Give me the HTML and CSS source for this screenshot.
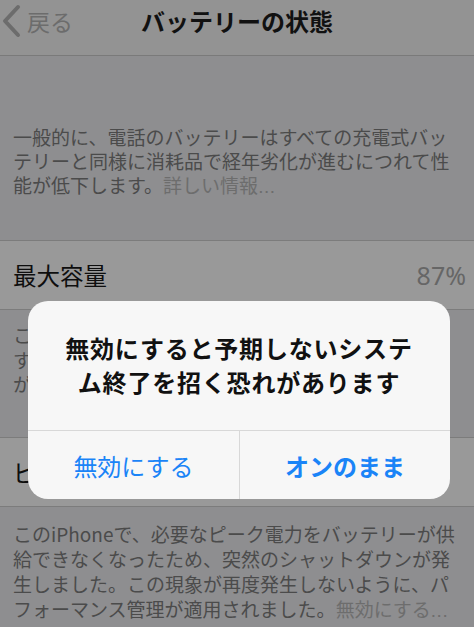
FILE: index.html
```html
<!DOCTYPE html>
<html lang="ja">
<head>
<meta charset="utf-8">
<title>バッテリーの状態</title>
<link rel="stylesheet" href="styles.css">
</head>
<body>
<div class="screen">
  <header class="nav">
    <div class="back">
      <svg class="chev" width="20" height="34" viewBox="0 0 20 34"><path d="M17 3 L4 17 L17 31" fill="none" stroke="#6c6c6c" stroke-width="4" stroke-linecap="round" stroke-linejoin="round"/></svg>
      <span class="back-label">戻る</span>
    </div>
    <h1 class="title">バッテリーの状態</h1>
    <div></div>
  </header>

  <p class="note note-top">一般的に、電話のバッテリーはすべての充電式バッテリーと同様に消耗品で経年劣化が進むにつれて性能が低下します。<span class="link">詳しい情報<span class="dots">...</span></span></p>

  <div class="row">
    <span class="row-label">最大容量</span>
    <span class="row-value">87%</span>
  </div>

  <p class="note note-mid">これは新品時と比較したバッテリー容量の尺度で<br>す。容量が低いと、充電から次の充電までの時間<br>が短くなる場合があります。</p>

  <div class="row">
    <span class="row-label">ピークパフォーマンス性能</span>
  </div>

  <p class="note note-bottom">このiPhoneで、必要なピーク電力をバッテリーが供給できなくなったため、突然のシャットダウンが発生しました。この現象が再度発生しないように、パフォーマンス管理が適用されました。<span class="link">無効にする<span class="dots">...</span></span></p>

  <div class="alert">
    <div class="alert-title">無効にすると予期しないシステム終了を招く恐れがあります</div>
    <div class="alert-actions">
      <button class="alert-btn">無効にする</button>
      <button class="alert-btn strong">オンのまま</button>
    </div>
  </div>
</div>
</body>
</html>
```

FILE: styles.css
```css
html, body {
  margin: 0;
  padding: 0;
}
body {
  font-family: "Noto Sans CJK JP", "Noto Sans", sans-serif;
  background: #8e8e90;
}
.screen {
  position: relative;
  width: 474px;
  height: 627px;
  overflow: hidden;
  background: #8e8e90;
}
.nav {
  height: 55px;
  background: #939393;
  border-bottom: 1px solid #7a7a7a;
  display: grid;
  grid-template-columns: 1fr auto 1fr;
  align-items: start;
}
.back {
  display: flex;
  align-items: center;
  gap: 6px;
  padding: 4px 0 0 1px;
  height: 34px;
}
.chev {
  display: block;
}
.back-label {
  font-size: 23px;
  color: #6c6c6c;
  line-height: 34px;
}
.title {
  margin: 0;
  padding-top: 4px;
  font-size: 24px;
  font-weight: 700;
  line-height: 34px;
  color: #111;
}
.note {
  margin: 0;
  padding: 0 13px;
  font-size: 19px;
  color: #4b4b4b;
}
.link {
  color: #6d6d6d;
}
.dots {
  font-family: "Liberation Sans", sans-serif;
  letter-spacing: 0.5px;
}
.note-top {
  padding-top: 69px;
  padding-bottom: 41px;
  line-height: 24px;
}
.note-mid {
  padding-top: 13px;
  padding-bottom: 40px;
  line-height: 24.5px;
}
.note-bottom {
  padding-top: 14px;
  line-height: 25px;
}
.row {
  height: 68px;
  background: #999999;
  border-top: 1px solid #7c7c7c;
  border-bottom: 1px solid #7c7c7c;
  display: flex;
  align-items: center;
  justify-content: space-between;
  padding: 0 8px 0 13px;
}
.row-label {
  font-size: 23.5px;
  color: #0e0e0e;
}
.row-value {
  font-family: "Noto Sans", sans-serif;
  font-size: 25px;
  color: #666;
}
.alert {
  position: absolute;
  left: 28px;
  top: 301px;
  width: 422px;
  height: 198px;
  background: #f7f7f7;
  border-radius: 20px;
  overflow: hidden;
  display: flex;
  flex-direction: column;
}
.alert-title {
  padding: 30px 28px 0;
  height: 130px;
  flex: none;
  box-sizing: border-box;
  font-size: 24px;
  font-weight: 700;
  line-height: 34px;
  letter-spacing: 0.8px;
  text-align: center;
  color: #111;
  border-bottom: 1px solid #d8d8d8;
}
.alert-actions {
  flex: 1;
  display: grid;
  grid-template-columns: 211px 1fr;
}
.alert-btn {
  border: none;
  background: transparent;
  font-family: "Noto Sans CJK JP", "Noto Sans", sans-serif;
  font-size: 24px;
  color: #1a84f7;
  padding: 0;
  margin: 0;
}
.alert-btn + .alert-btn {
  border-left: 1px solid #d8d8d8;
}
.alert-btn.strong {
  font-weight: 700;
}
```
